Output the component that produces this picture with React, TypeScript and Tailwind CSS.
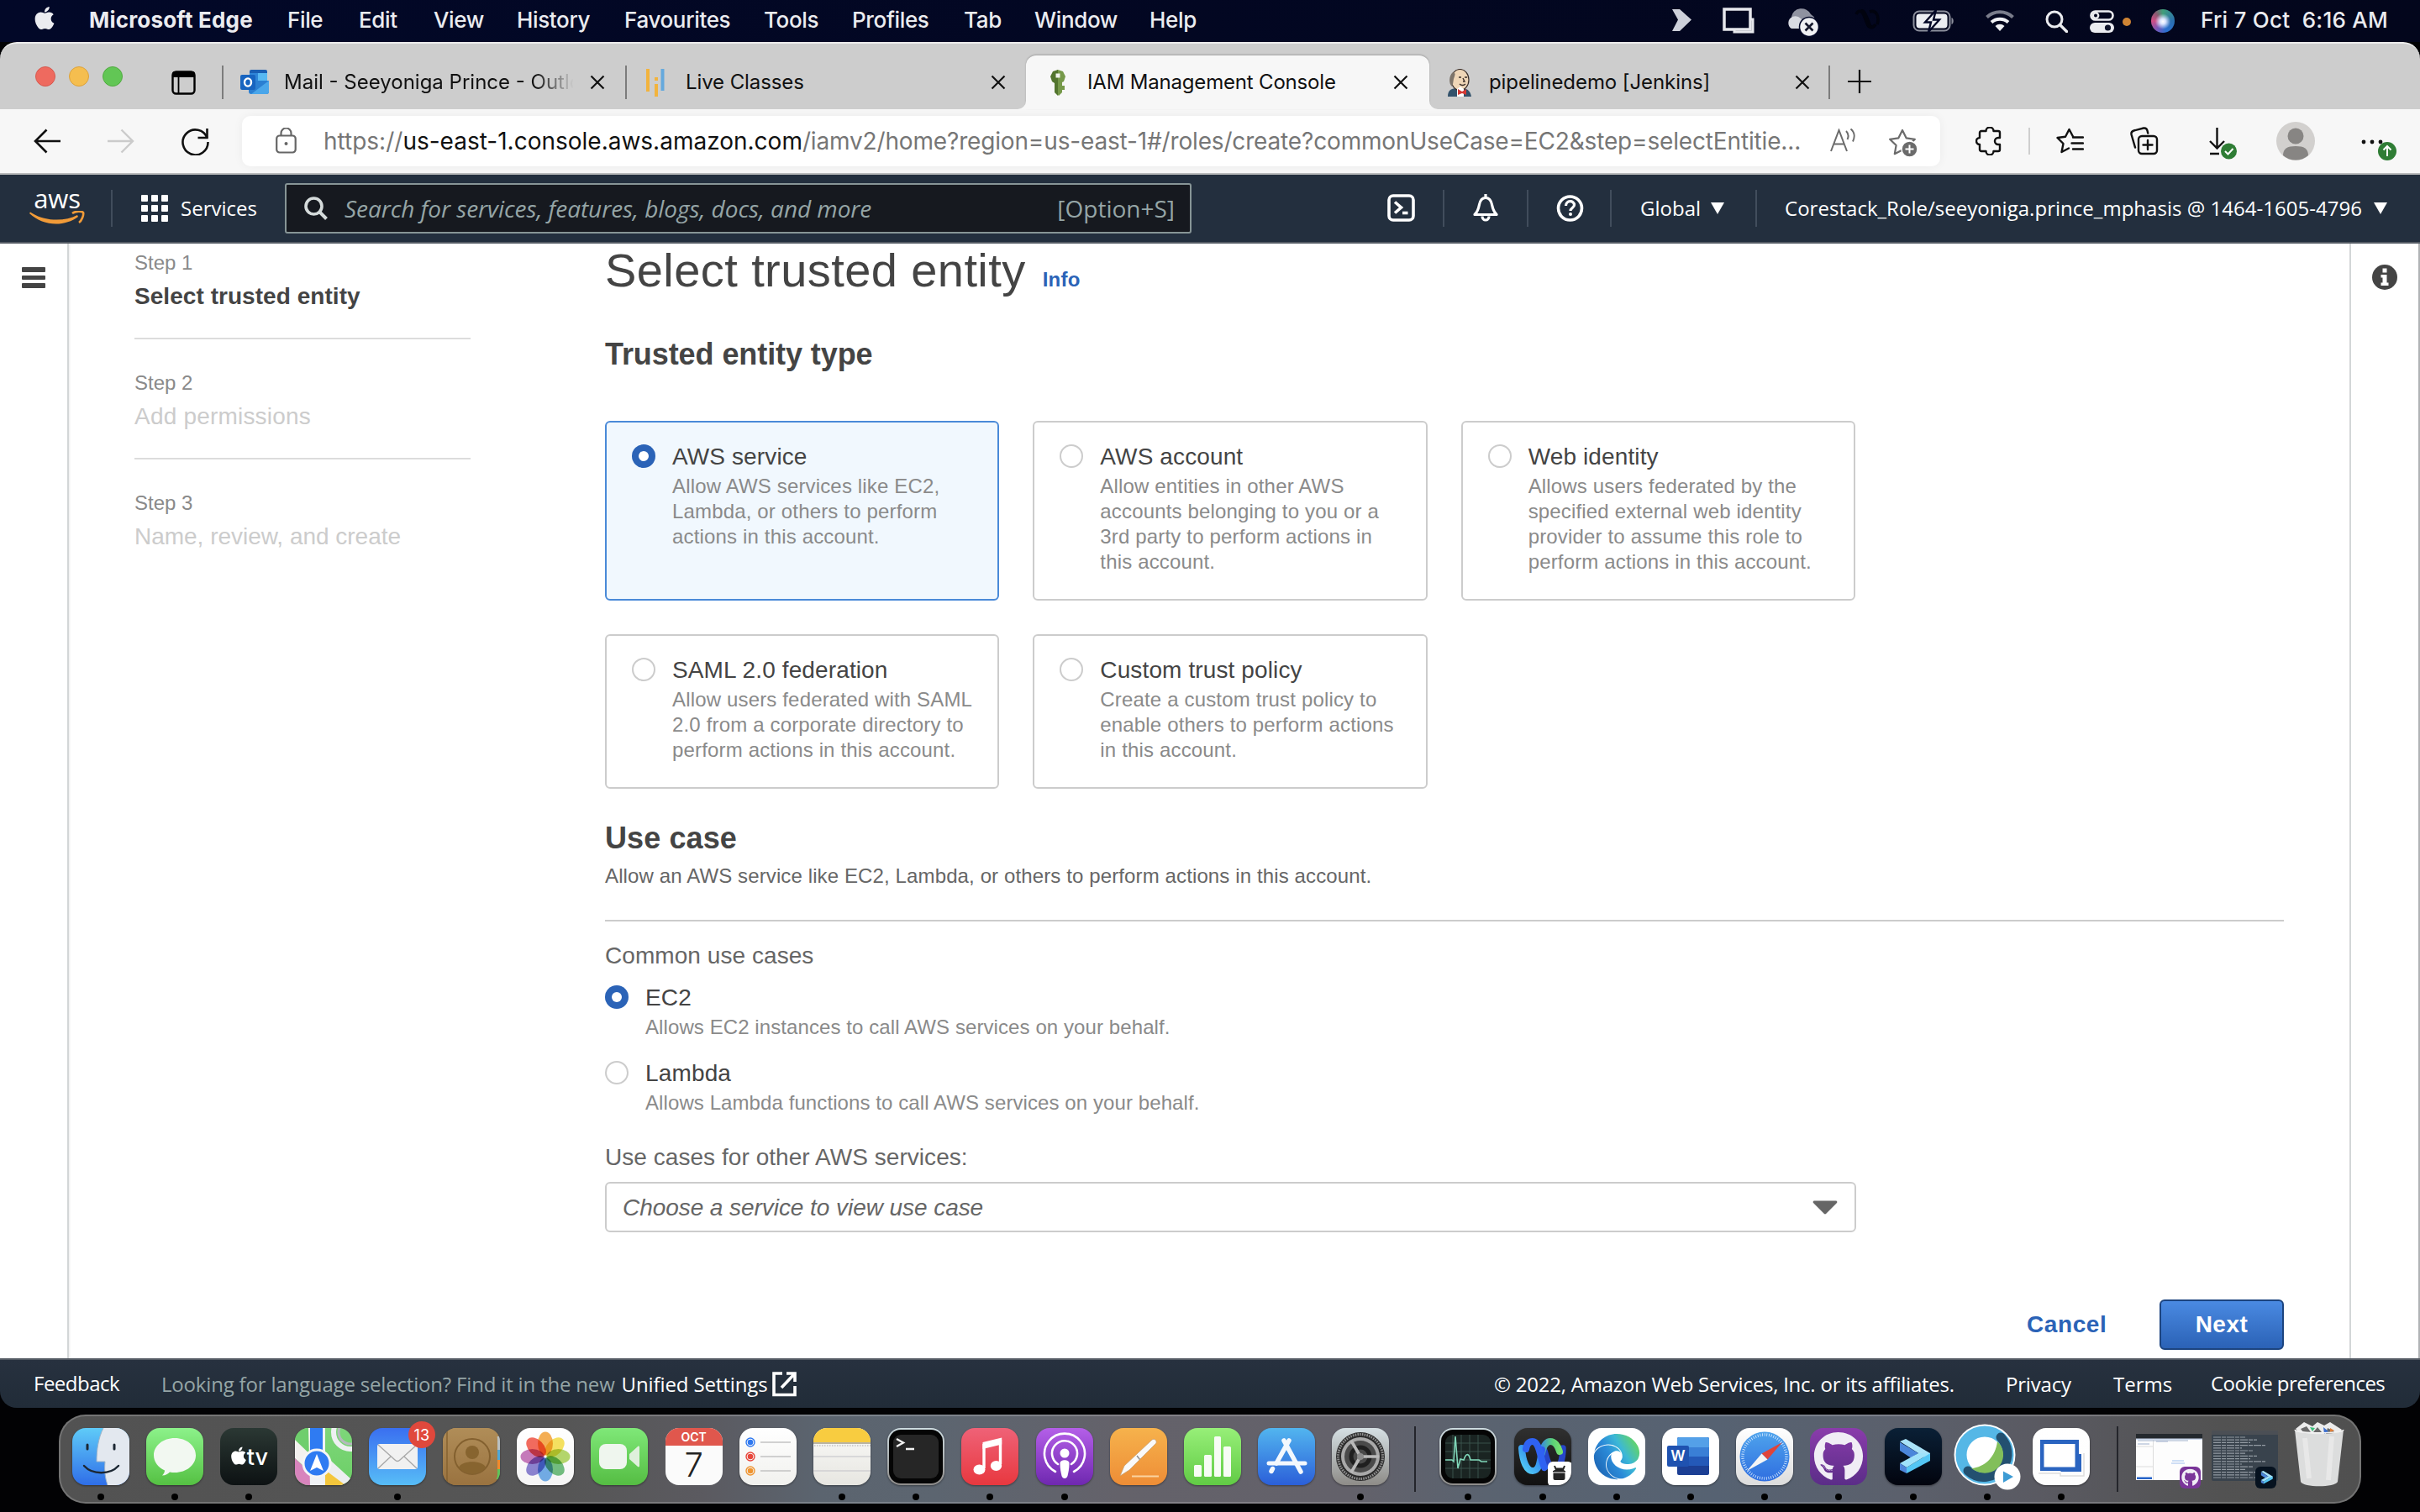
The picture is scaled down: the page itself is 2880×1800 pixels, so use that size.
import type { ReactNode } from "react";
import { FaApple, FaGithub, FaEdge } from "react-icons/fa";

/* ---------- small helpers ---------- */

function Svg({ w, h, vb, className = "", children }: { w: number; h: number; vb?: string; className?: string; children: ReactNode }) {
  return (
    <svg width={w} height={h} viewBox={vb ?? `0 0 ${w} ${h}`} className={`shrink-0 ${className}`} fill="none">
      {children}
    </svg>
  );
}

/* ---------- macOS menu bar ---------- */

const menus: [string, string][] = [
  ["File", "w-[85px]"],
  ["Edit", "w-[89px]"],
  ["View", "w-[99px]"],
  ["History", "w-[128px]"],
  ["Favourites", "w-[166px]"],
  ["Tools", "w-[105px]"],
  ["Profiles", "w-[133px]"],
  ["Tab", "w-[84px]"],
  ["Window", "w-[137px]"],
  ["Help", "w-[60px]"],
];

function MenuBar() {
  return (
    <div className="flex h-[50px] items-center bg-linear-to-r from-[#020828] to-[#03061c] pb-[4px] font-[Inter,sans-serif] text-[26px] font-medium text-[#ebecf0]">
      <div className="flex w-[1989px] shrink-0 items-center pl-[38px]">
        <FaApple className="mt-[-3px] size-[31px] w-[30px] shrink-0" />
        <div className="ml-[38px] w-[236px] font-bold tracking-[0.2px]">Microsoft Edge</div>
        {menus.map(([label, w]) => (
          <div key={label} className={`${w} shrink-0 tracking-[-0.35px]`}>{label}</div>
        ))}
      </div>
      <Svg w={26} h={27}>
        <path d="M1 1h9l14 12.500l-14 13.500H1l7-13.500z" fill="#cdd0da" />
      </Svg>
      <Svg w={38} h={31} className="ml-[35px] mt-[3px]">
        <path d="M2 2h31v24H2z" stroke="#e6e7ec" strokeWidth="3.500" />
        <path d="M14 26v3h22V14h-2" stroke="#e6e7ec" strokeWidth="3" />
      </Svg>
      <Svg w={42} h={36} className="ml-[36px] mt-[6px]">
        <path d="M8 12a12 11 0 0 1 23-3a11 11 0 0 1 5 6L20 24z" fill="#8f92a0" />
        <path d="M9 12a9 9 0 0 1 10 2l11 9v3H8A8 8 0 0 1 9 12z" fill="#d7d9e0" />
        <circle cx="29" cy="24" r="11.500" fill="#f0f1f4" stroke="#020726" strokeWidth="1.500" />
        <path d="M24.500 19.500l9 9m0-9l-9 9" stroke="#15182c" strokeWidth="2.600" />
      </Svg>
      <Svg w={31} h={24} className="ml-[41px]">
        <path d="M2 6c2-5 7-5 9 1l4 10c2 6 7 6 10 1M8 2c6-2 9 20 13 19M18 3c8-3 12 6 9 15" stroke="#01030f" strokeWidth="3.500" />
      </Svg>
      <Svg w={50} h={26} className="ml-[38px] mt-[3px]">
        <rect x="1.500" y="1.500" width="43" height="23" rx="6.500" stroke="#8c8f9c" strokeWidth="2" />
        <rect x="4.500" y="4.500" width="37" height="17" rx="4" fill="#eceef2" />
        <path d="M46.500 9v8c3-1 3-7 0-8z" fill="#8c8f9c" />
        <path d="M28 0L15 14.500h7L19 26l13-14.500h-7z" fill="#eceef2" stroke="#020726" strokeWidth="2.400" />
      </Svg>
      <Svg w={34} h={25} className="ml-[37px] mt-[2px]">
        <path d="M1.500 8.500a22.500 22.500 0 0 1 31 0" stroke="#7a7d8b" strokeWidth="4" />
        <path d="M7 14.500a15 15 0 0 1 20 0" stroke="#f0f1f4" strokeWidth="4" />
        <path d="M17 25l-5.500-6a8 8 0 0 1 11 0z" fill="#f0f1f4" />
      </Svg>
      <Svg w={27} h={27} className="ml-[37px] mt-[4px]">
        <circle cx="11" cy="11" r="9" stroke="#ebecf0" strokeWidth="3" />
        <path d="M17.500 17.500l8 8" stroke="#ebecf0" strokeWidth="3.400" strokeLinecap="round" />
      </Svg>
      <Svg w={29} h={27} className="ml-[26px] mt-[4px]">
        <rect x="1.500" y="1.500" width="26" height="10" rx="5" stroke="#ebecf0" strokeWidth="2.600" />
        <circle cx="7" cy="6.500" r="3.200" stroke="#ebecf0" strokeWidth="2.400" />
        <rect x="0" y="15" width="29" height="12" rx="6" fill="#ebecf0" />
        <circle cx="21.500" cy="21" r="3.600" fill="#10142c" />
      </Svg>
      <div className="ml-[10px] mt-[6px] size-[10px] shrink-0 rounded-full bg-[#cf8434]" />
      <div className="ml-[24px] mt-[3px] size-[28px] shrink-0 rounded-full bg-[radial-gradient(circle_at_50%_52%,#ffffff_0%,#d9e4ff_16%,transparent_46%),conic-gradient(#3f9f7a,#2b6fb0_25%,#2a6fd0_45%,#7a58b8_60%,#d04e86_75%,#8a5a70_88%,#3f9f7a)]" />
      <div className="ml-[31px] shrink-0 whitespace-pre tracking-[0.25px]">Fri 7 Oct  6:16 AM</div>
    </div>
  );
}

/* ---------- browser tab strip ---------- */

const Close = ({ className = "" }: { className?: string }) => (
  <Svg w={18} h={18} className={className}>
    <path d="M1.500 1.500l15 15m0-15l-15 15" stroke="#111" strokeWidth="2.200" />
  </Svg>
);

function OutlookIcon() {
  return (
    <Svg w={34} h={30}>
      <rect x="11" y="0" width="21" height="24" rx="2" fill="#1a5fb4" />
      <rect x="21" y="4" width="11" height="9" fill="#57b8f2" />
      <rect x="11" y="4" width="10" height="9" fill="#2f86d8" />
      <path d="M10 13h24v13a3 3 0 0 1-3 3H13a3 3 0 0 1-3-3z" fill="#2b7fd2" />
      <path d="M34 13v13a3 3 0 0 1-3 3H13z" fill="#4aa6ea" />
      <rect x="0" y="6" width="18" height="18" rx="2" fill="#1764c0" />
      <ellipse cx="9" cy="15" rx="4" ry="4.600" stroke="#fff" strokeWidth="2.400" />
    </Svg>
  );
}

function KeyIcon() {
  return (
    <Svg w={20} h={31}>
      <path d="M10 0l6 2l3 6l-2 6l-2 1v4h3v5h-3v3l-4 4l-2-2V0z" fill="#76994a" />
      <path d="M10 0L4 2L1 8l2 6l3 2v11l4 4z" fill="#53752f" />
      <rect x="7.500" y="4.500" width="5" height="5" fill="#f1f4ec" />
    </Svg>
  );
}

function JenkinsIcon() {
  return (
    <Svg w={30} h={33}>
      <path d="M1 33c0-7 3-9 9-10h10c5 1 8 4 9 10z" fill="#33526b" />
      <ellipse cx="15.500" cy="13" rx="10.500" ry="12.500" fill="#efd6b7" stroke="#3b2f2a" strokeWidth="1.200" />
      <path d="M7 4C2 8 2 18 6 21c2-4 1-8 3-12c1-3 1-4-2-5z" fill="#7d746a" />
      <path d="M12 24l4-3l4 3v9h-8z" fill="#fff" />
      <path d="M13 24l5 3l5-3v7l-5-2l-5 2z" fill="#d33833" />
      <path d="M14 10h3M21 10h3M15 18c2 2 5 2 7 0M19 11l2 4h-2" stroke="#3b2f2a" strokeWidth="1.400" />
    </Svg>
  );
}

function TabStrip() {
  return (
    <div className="flex h-[80px] items-end rounded-t-[20px] border-t-2 border-[#ececec] bg-[#cdcdcd] pl-[42px] font-[Inter,sans-serif] text-[24px] text-[#111]">
      <div className="flex h-[78px] items-center gap-[16px]">
        <div className="size-[24px] rounded-full border border-[#d65a50] bg-[#ee6a5f]" />
        <div className="size-[24px] rounded-full border border-[#dca23c] bg-[#f5be4f]" />
        <div className="size-[24px] rounded-full border border-[#52ab42] bg-[#62c655]" />
      </div>
      <div className="flex h-[64px] grow items-center">
        <Svg w={29} h={29} className="ml-[58px]">
          <rect x="1.500" y="1.500" width="26" height="26" rx="4" stroke="#000" strokeWidth="2.400" />
          <path d="M1 8V4a3 3 0 0 1 3-3h21a3 3 0 0 1 3 3v4z" fill="#000" />
          <path d="M8.500 8v19" stroke="#000" strokeWidth="1.800" />
        </Svg>
        <div className="ml-[31px] h-[40px] w-[2px] shrink-0 bg-[#7c7c7c]" />
        <div className="ml-[20px] flex w-[458px] shrink-0 items-center">
          <OutlookIcon />
          <div className="ml-[18px] w-[348px] overflow-hidden whitespace-nowrap [mask-image:linear-gradient(to_right,black_86%,transparent_99%)]">Mail - Seeyoniga Prince - Outlook</div>
          <Close className="ml-[16px]" />
        </div>
        <div className="h-[40px] w-[2px] shrink-0 bg-[#7c7c7c]" />
        <div className="flex w-[475px] shrink-0 items-center pl-[23px]">
          <Svg w={22} h={33}>
            <path d="M2 0v27M12 10v4M12 18v15" stroke="#f2b33d" strokeWidth="4" />
            <path d="M19.500 0v26" stroke="#65a9dd" strokeWidth="4" />
          </Svg>
          <div className="ml-[25px] w-[363px] tracking-[-0.1px]">Live Classes</div>
          <Close />
        </div>
        <div className="relative flex h-[64px] w-[480px] shrink-0 items-center rounded-t-[12px] bg-[#f7f7f7] pl-[28px] shadow-[0_-1px_2px_rgba(0,0,0,0.22)]">
          <Svg w={10} h={10} className="absolute bottom-0 left-[-10px]"><path d="M10 0v10H0a10 10 0 0 0 10-10z" fill="#f7f7f7" /></Svg>
          <Svg w={10} h={10} className="absolute right-[-10px] bottom-0"><path d="M0 0v10h10a10 10 0 0 1-10-10z" fill="#f7f7f7" /></Svg>
          <KeyIcon />
          <div className="ml-[25px] w-[364px] tracking-[-0.18px]">IAM Management Console</div>
          <Close />
        </div>
        <div className="flex w-[475px] shrink-0 items-center pl-[21px]">
          <JenkinsIcon />
          <div className="ml-[20px] w-[364px] tracking-[-0.08px]">pipelinedemo [Jenkins]</div>
          <Close />
        </div>
        <div className="h-[40px] w-[2px] shrink-0 bg-[#7c7c7c]" />
        <Svg w={28} h={28} className="ml-[21px] mb-[2px]">
          <path d="M14 0v28M0 14h28" stroke="#111" strokeWidth="2.200" />
        </Svg>
      </div>
    </div>
  );
}

/* ---------- browser toolbar ---------- */

function Toolbar() {
  return (
    <div className="flex h-[78px] items-center border-b-2 border-[#b9babb] bg-[#f7f7f7] pr-[20px]">
      <Svg w={33} h={30} className="ml-[40px]">
        <path d="M32 15H2M15.500 1.500L2 15l13.500 13.500" stroke="#111" strokeWidth="2.600" />
      </Svg>
      <Svg w={33} h={30} className="ml-[54px]">
        <path d="M1 15h30M17.500 1.500L31 15L17.500 28.500" stroke="#cbcbcb" strokeWidth="2.400" />
      </Svg>
      <Svg w={33} h={33} className="ml-[56px]">
        <path d="M30.500 12A15 15 0 1 0 31.500 17" stroke="#111" strokeWidth="2.600" />
        <path d="M30.500 1v11H19.500" stroke="#111" strokeWidth="2.600" />
      </Svg>
      <div className="ml-[39px] flex h-[60px] w-[2021px] shrink-0 items-center rounded-[10px] bg-white pl-[40px] font-[Inter,sans-serif] text-[28px] text-[#767676] shadow-[0_0_12px_rgba(0,0,0,0.05)]">
        <Svg w={25} h={31} className="mb-[2px]">
          <rect x="1.200" y="9.500" width="22.500" height="20" rx="3.500" stroke="#666" strokeWidth="2.200" />
          <path d="M6.500 9V6.500a6 6 0 0 1 12 0V9" stroke="#666" strokeWidth="2.200" />
          <circle cx="12.500" cy="19" r="2" fill="#666" />
        </Svg>
        <div className="ml-[32px] w-[1793px] shrink-0 whitespace-nowrap">
          https://<span className="text-[#111]">us-east-1.console.aws.amazon.com</span>
          <span className="tracking-[-0.16px]">/iamv2/home?region=us-east-1#/roles/create?commonUseCase=EC2&amp;step=selectEntitie...</span>
        </div>
        <Svg w={32} h={28} className="mb-[2px]">
          <path d="M1 27L10.500 2L20 27M4.500 18.500h12" stroke="#6b6b6b" strokeWidth="2" />
          <path d="M19 3c3 3 3 7 1.500 10M24.500 0.500c5 4 5 10 2.500 15" stroke="#6b6b6b" strokeWidth="2" />
        </Svg>
        <Svg w={36} h={34} className="ml-[37px] mt-[3px]">
          <path d="M17 2l4.600 9.300l10.300 1.500l-7.500 7.200l1.800 10.200L17 25.400L7.800 30.200l1.800-10.200L2.100 12.800l10.300-1.500z" stroke="#6b6b6b" strokeWidth="2.200" strokeLinejoin="round" />
          <circle cx="25.500" cy="24.500" r="9.500" fill="#6b6b6b" stroke="#fff" strokeWidth="1.500" />
          <path d="M25.500 19.500v10M20.500 24.500h10" stroke="#fff" strokeWidth="2" />
        </Svg>
      </div>
      <Svg w={32} h={34} className="ml-[42px]">
        <path d="M7 5h5.500a4.500 4.500 0 0 1 9 0H27a2 2 0 0 1 2 2v6h-2a4 4 0 0 0 0 8h2v6a2 2 0 0 1-2 2h-5.500a4.500 4.500 0 0 1-9 0H7a2 2 0 0 1-2-2v-6a4 4 0 0 1 0-8V7a2 2 0 0 1 2-2z" stroke="#111" strokeWidth="2.400" strokeLinejoin="round" />
      </Svg>
      <div className="ml-[31px] h-[32px] w-[2px] shrink-0 bg-[#cfcfcf]" />
      <Svg w={33} h={32} className="ml-[31px]">
        <path d="M20 10.500L15.500 2L11 10.800L1.500 12l7 7L6.500 29l8.500-4.500" stroke="#111" strokeWidth="2.400" strokeLinejoin="round" strokeLinecap="round" />
        <path d="M20 11.500h12M18.500 18.500H32M20 25.500h12" stroke="#111" strokeWidth="2.400" strokeLinecap="round" />
      </Svg>
      <Svg w={35} h={34} className="ml-[54px]">
        <rect x="11" y="11" width="22" height="21" rx="4" stroke="#111" strokeWidth="2.400" />
        <path d="M22 16v11M16.500 21.500h11M7 24.500L2.500 9a4 4 0 0 1 3-4.500L17 1.500a4 4 0 0 1 4.500 3l.7 3" stroke="#111" strokeWidth="2.400" strokeLinecap="round" />
      </Svg>
      <Svg w={34} h={38} className="ml-[60px] mt-[5px]">
        <path d="M9.500 0v24M1 16l8.500 8.500L18 16M1 31h11" stroke="#111" strokeWidth="2.400" />
        <circle cx="23.500" cy="28" r="9.500" fill="#2f7d35" />
        <path d="M19 28l3.500 3.500l6-6.500" stroke="#fff" strokeWidth="2" />
      </Svg>
      <Svg w={46} h={46} className="ml-[46px]">
        <circle cx="23" cy="23" r="23" fill="#d2d0ce" />
        <circle cx="23" cy="17" r="9.500" fill="#878583" />
        <path d="M8 40c0-8 5-11 15-11s15 3 15 11a23 23 0 0 1-30 0z" fill="#878583" />
      </Svg>
      <Svg w={44} h={26} className="ml-[55px] mt-[20px]">
        <circle cx="3" cy="4" r="2.400" fill="#111" />
        <circle cx="13" cy="4" r="2.400" fill="#111" />
        <circle cx="23" cy="4" r="2.400" fill="#111" />
        <circle cx="31" cy="15" r="11" fill="#2f7d35" />
        <path d="M31 21V9.500M26.500 13.500L31 9l4.500 4.500" stroke="#fff" strokeWidth="2" />
      </Svg>
    </div>
  );
}

/* ---------- AWS navigation ---------- */

const Divider = ({ className }: { className: string }) => <div className={`h-[44px] w-[2px] shrink-0 bg-[#414d5c] ${className}`} />;

function AwsNav() {
  return (
    <div className="flex h-[82px] items-center border-b-2 border-[#545b64] bg-[#232f3e] font-['Open_Sans',sans-serif] text-[24px] font-medium text-white">
      <div className="ml-[35px] flex w-[66px] shrink-0 flex-col items-center">
        <div className="h-[26px] text-[31px] leading-[18px] font-medium tracking-[-0.2px]">aws</div>
        <Svg w={66} h={18} className="mt-[-2px]">
          <path d="M1 1.500C18 13 42 13 57 5l1 2C42 19 17 19 0 3z" fill="#f19b38" />
          <path d="M51 3c4-3 11-3 13-1c1 3-2 10-5 12" stroke="#f19b38" strokeWidth="2.600" />
        </Svg>
      </div>
      <Divider className="ml-[31px]" />
      <div className="ml-[34px] grid grid-cols-3 gap-[4px]">
        {Array.from({ length: 9 }, (_, i) => <div key={i} className="size-[8px] rounded-[1px] bg-white" />)}
      </div>
      <div className="ml-[15px] w-[124px] shrink-0">Services</div>
      <div className="flex h-[60px] w-[1079px] shrink-0 items-center rounded-[3px] border-2 border-[#879596] bg-[#16191f] pr-[18px] pl-[21px] text-[28px] font-normal text-[#95a5a6]">
        <Svg w={28} h={28}>
          <circle cx="11.500" cy="11.500" r="9.500" stroke="#d5dbdb" strokeWidth="3.600" />
          <path d="M18.500 18.500l8 8" stroke="#d5dbdb" strokeWidth="4" />
        </Svg>
        <div className="ml-[20px] grow tracking-[-0.06px] whitespace-nowrap italic">Search for services, features, blogs, docs, and more</div>
        <div>[Option+S]</div>
      </div>
      <Svg w={34} h={34} className="ml-[233px]">
        <rect x="2" y="2" width="29" height="29" rx="5" stroke="#fff" strokeWidth="3.600" />
        <path d="M9 9.500l7.500 6.500L9 22.500" stroke="#fff" strokeWidth="3.600" />
        <path d="M18 22.500h6.500" stroke="#fff" strokeWidth="3.600" />
      </Svg>
      <Divider className="ml-[32px]" />
      <Svg w={32} h={34} className="ml-[33px]">
        <path d="M16 0v4M3 24.500c4-4 4.500-7 5.500-12c1-5 3.500-8 7.500-8s6.500 3 7.500 8c1 5 1.500 8 5.500 12z" stroke="#fff" strokeWidth="3.200" strokeLinejoin="round" />
        <path d="M12 26.500c0 6 8 6 8 0" stroke="#fff" strokeWidth="3.200" />
      </Svg>
      <Divider className="ml-[33px]" />
      <Svg w={34} h={34} className="ml-[33px]">
        <circle cx="16.500" cy="17" r="14" stroke="#fff" strokeWidth="3.600" />
        <path d="M11.500 14c0-7 10-7 10-1c0 3.500-4.500 3.500-4.500 7" stroke="#fff" strokeWidth="3.200" />
        <circle cx="17" cy="24" r="2" fill="#fff" />
      </Svg>
      <Divider className="ml-[30px]" />
      <div className="ml-[34px] w-[84px] shrink-0">Global</div>
      <Svg w={16} h={14}><path d="M0 0h16L8 14z" fill="#fff" /></Svg>
      <Divider className="ml-[37px]" />
      <div className="ml-[33px] w-[701px] shrink-0 tracking-[0.03px] whitespace-nowrap">Corestack_Role/seeyoniga.prince_mphasis @ 1464-1605-4796</div>
      <Svg w={16} h={14}><path d="M0 0h16L8 14z" fill="#fff" /></Svg>
    </div>
  );
}

/* ---------- console content ---------- */

const steps = [
  { n: "Step 1", title: "Select trusted entity", style: "font-bold text-[#444] tracking-[0.05px]" },
  { n: "Step 2", title: "Add permissions", style: "text-[#ccc] tracking-[0.2px]" },
  { n: "Step 3", title: "Name, review, and create", style: "text-[#ccc] tracking-[-0.02px]" },
];

function Steps() {
  return (
    <div className="w-[400px] shrink-0 pt-[7px]">
      {steps.map((s, i) => (
        <div key={s.n} className={i < 2 ? "mb-[36px] border-b-2 border-[#dcdcdc] pb-[31px]" : ""}>
          <div className="text-[24px] leading-[32px] text-[#8a8a8a]">{s.n}</div>
          <div className={`mt-[6px] text-[28px] leading-[36px] ${s.style}`}>{s.title}</div>
        </div>
      ))}
    </div>
  );
}

const Radio = ({ on }: { on?: boolean }) =>
  on ? (
    <div className="flex size-[28px] shrink-0 items-center justify-center rounded-full bg-[#2b63b7]">
      <div className="size-[12px] rounded-full bg-white" />
    </div>
  ) : (
    <div className="size-[28px] shrink-0 rounded-full border-2 border-[#ccc] bg-white" />
  );

const entities: { title: string; lines: string[]; on?: boolean }[] = [
  { title: "AWS service", lines: ["Allow AWS services like EC2,", "Lambda, or others to perform", "actions in this account."], on: true },
  { title: "AWS account", lines: ["Allow entities in other AWS", "accounts belonging to you or a", "3rd party to perform actions in", "this account."] },
  { title: "Web identity", lines: ["Allows users federated by the", "specified external web identity", "provider to assume this role to", "perform actions in this account."] },
  { title: "SAML 2.0 federation", lines: ["Allow users federated with SAML", "2.0 from a corporate directory to", "perform actions in this account."] },
  { title: "Custom trust policy", lines: ["Create a custom trust policy to", "enable others to perform actions", "in this account."] },
];

function EntityCard({ title, lines, on }: { title: string; lines: string[]; on?: boolean }) {
  return (
    <div className={`flex rounded-[6px] border-2 pt-[20px] pb-[29px] pl-[30px] ${on ? "border-[#4a8ad8] bg-[#f1f8fe]" : "border-[#ccc] bg-white"}`}>
      <div className="flex h-[40px] items-center"><Radio on={on} /></div>
      <div className="ml-[20px] pt-px whitespace-nowrap">
        <div className="text-[28px] leading-[40px] tracking-[0.12px] text-[#444]">{title}</div>
        <div className="text-[24px] leading-[30px] tracking-[0.16px] text-[#8a8a8a]">
          {lines.map((l) => <div key={l}>{l}</div>)}
        </div>
      </div>
    </div>
  );
}

function UseCase({ title, desc, on }: { title: string; desc: string; on?: boolean }) {
  return (
    <div className="flex h-[90px]">
      <div className="flex h-[40px] items-center"><Radio on={on} /></div>
      <div className="ml-[20px] pt-px">
        <div className="text-[28px] leading-[40px] tracking-[0.15px] text-[#444]">{title}</div>
        <div className="text-[24px] leading-[30px] tracking-[0.09px] text-[#8a8a8a]">{desc}</div>
      </div>
    </div>
  );
}

function Content() {
  return (
    <div className="flex h-[1327px] border-r-2 border-[#b0b3b5] bg-white font-['Liberation_Sans',Arial,sans-serif] text-[#444]">
      <div className="w-[82px] shrink-0 border-r-2 border-[#d3d6d7] pt-[28px] pl-[26px] shadow-[1px_0_2px_rgba(0,0,0,0.08)]">
        <div className="flex w-[28px] flex-col gap-[4px]">
          <div className="h-[5.500px] rounded-[1px] bg-[#444]" />
          <div className="h-[5.500px] rounded-[1px] bg-[#444]" />
          <div className="h-[5.500px] rounded-[1px] bg-[#444]" />
        </div>
      </div>
      <div className="flex grow pl-[78px]">
        <Steps />
        <div className="ml-[160px] w-[1998px] shrink-0">
          <div className="flex h-[64px] items-baseline whitespace-nowrap">
            <h1 className="text-[56px] leading-[64px] tracking-[0.42px]">Select trusted entity</h1>
            <span className="ml-[20px] text-[24px] font-bold tracking-[0.3px] text-[#2b63b7]">Info</span>
          </div>
          <h2 className="mt-[45px] text-[36px] leading-[46px] font-bold tracking-[-0.08px]">Trusted entity type</h2>
          <div className="mt-[56px] grid w-[1488px] grid-cols-3 gap-[40px]">
            {entities.map((e) => <EntityCard key={e.title} {...e} />)}
          </div>
          <h2 className="mt-[35px] text-[36px] leading-[48px] font-bold tracking-[0.1px]">Use case</h2>
          <p className="mt-[5px] text-[24px] leading-[32px] tracking-[0.12px] text-[#666]">Allow an AWS service like EC2, Lambda, or others to perform actions in this account.</p>
          <div className="mt-[36px] h-[2px] bg-[#ccc]" />
          <div className="mt-[21px] text-[28px] leading-[40px] tracking-[0.06px] text-[#666]">Common use cases</div>
          <div className="mt-[9px]">
            <UseCase title="EC2" desc="Allows EC2 instances to call AWS services on your behalf." on />
            <UseCase title="Lambda" desc="Allows Lambda functions to call AWS services on your behalf." />
          </div>
          <div className="mt-[11px] text-[28px] leading-[40px] tracking-[0.05px] text-[#666]">Use cases for other AWS services:</div>
          <div className="mt-[9px] flex h-[60px] w-[1489px] items-center justify-between rounded-[6px] border-2 border-[#ccc] pr-[20px] pl-[19px]">
            <span className="pt-px text-[28px] tracking-[-0.06px] text-[#666] italic">Choose a service to view use case</span>
            <Svg w={30} h={17}><path d="M2 .5h26a1.500 1.500 0 0 1 1 2.500L16 16a1.500 1.500 0 0 1-2 0L1 3A1.500 1.500 0 0 1 2 .5z" fill="#666" /></Svg>
          </div>
          <div className="mt-[80px] flex h-[60px] items-center justify-end text-[28px] font-bold">
            <span className="w-[158px] tracking-[0.6px] text-[#2b63b7]">Cancel</span>
            <button className="h-[60px] w-[148px] rounded-[6px] border-2 border-[#1c447f] bg-linear-to-b from-[#4a8ae2] to-[#2b62b6] font-bold tracking-[0.5px] text-white">Next</button>
          </div>
        </div>
      </div>
      <div className="flex w-[82px] shrink-0 justify-center border-l-2 border-[#d3d6d7] pt-[25px]">
        <Svg w={30} h={30}>
          <circle cx="15" cy="15" r="15" fill="#444" />
          <path d="M12.500 4.500h5v5h-5zM10.500 12h7v9.500h2V25h-9v-3.500h2v-6h-2z" fill="#fff" />
        </Svg>
      </div>
    </div>
  );
}

function Footer() {
  return (
    <div className="flex h-[59px] items-center rounded-b-[20px] border-t-2 border-[#545b64] bg-linear-to-b from-[#27313f] to-[#212c38] font-['Open_Sans',sans-serif] text-[24px] font-medium whitespace-nowrap text-white">
      <div className="mt-[-2px] w-[153px] shrink-0 pl-[40px] tracking-[-0.5px]">Feedback</div>
      <div className="ml-[39px] font-normal tracking-[-0.18px] text-[#95a5a6]">Looking for language selection? Find it in the new</div>
      <div className="ml-[8px] tracking-[-0.12px]">Unified Settings</div>
      <Svg w={30} h={30} className="ml-[6px]">
        <path d="M12 2H2v25.500h25V17" stroke="#fff" strokeWidth="3.600" />
        <path d="M17 2h10v10M27 2L11 19" stroke="#fff" strokeWidth="3.600" />
      </Svg>
      <div className="grow" />
      <div className="w-[609px] shrink-0 tracking-[-0.23px]">© 2022, Amazon Web Services, Inc. or its affiliates.</div>
      <div className="w-[128px] shrink-0 tracking-[-0.2px]">Privacy</div>
      <div className="w-[116px] shrink-0">Terms</div>
      <div className="mt-[-2px] w-[249px] shrink-0 tracking-[-0.5px]">Cookie preferences</div>
    </div>
  );
}

/* ---------- dock ---------- */

function Grad({ id, a, b }: { id: string; a: string; b: string }) {
  return (
    <linearGradient id={id} x1="0" y1="0" x2="0" y2="1">
      <stop offset="0" stopColor={a} />
      <stop offset="1" stopColor={b} />
    </linearGradient>
  );
}

function Tile({ id, a, b, children }: { id: string; a: string; b: string; children?: ReactNode }) {
  return (
    <svg width="68" height="68" viewBox="0 0 68 68" fill="none" className="overflow-visible drop-shadow-[0_1px_1px_rgba(0,0,0,0.4)]">
      <defs>
        <Grad id={id} a={a} b={b} />
        <clipPath id={`${id}c`}><rect width="68" height="68" rx="16" /></clipPath>
      </defs>
      <rect width="68" height="68" rx="16" fill={`url(#${id})`} />
      <g clipPath={`url(#${id}c)`}>{children}</g>
    </svg>
  );
}

const Finder = () => (
  <Tile id="finder" a="#5fcbf8" b="#2f6ee8">
    <path d="M37 0C31 12 29 26 29 40h10c-1 10 0 19 3 28h26V0z" fill="#e3e8ef" />
    <path d="M37 0C31 12 29 26 29 40h10c-1 10 0 19 3 28" stroke="#9fb4c8" strokeWidth="1" />
    <path d="M18 20v5M50 20v5" stroke="#1c2733" strokeWidth="3" strokeLinecap="round" />
    <path d="M14 45c10 11 31 11 41 0" stroke="#1c2733" strokeWidth="2.400" strokeLinecap="round" />
  </Tile>
);
const Messages = () => (
  <Tile id="messages" a="#8cf28a" b="#55c143">
    <path d="M34 12c14 0 25 9 25 20.500S48 53 34 53c-2 0-4 0-6-.6c-2 2-5 4-9 4c2-2 3-4 3-6C14 47 9 40 9 32.500C9 21 20 12 34 12z" fill="#f2f8f1" />
  </Tile>
);
const AppleTv = () => (
  <div className="flex size-[68px] items-center justify-center rounded-[16px] bg-linear-to-b from-[#2b3834] to-[#0d1213] font-[Inter,sans-serif] text-[27px] leading-none font-medium text-white">
    <FaApple className="mb-[2px] size-[24px] w-[20px]" />
    <span>tv</span>
  </div>
);
const Maps = () => (
  <Tile id="maps" a="#7ed67a" b="#6ccf66">
    <path d="M0 0h16v34L0 20z" fill="#6fce6d" />
    <path d="M0 14L56 68H36L0 36z" fill="#f3f1ef" />
    <path d="M0 36l34 32H0z" fill="#d884bd" />
    <path d="M16 0h20v68H18z" fill="#f0f2f5" />
    <path d="M18 0h15v40H18z" fill="#2f7bf2" />
    <path d="M33 30L68 62v6H36z" fill="#eceef0" />
    <path d="M36 50l24 18H36z" fill="#f4c63c" />
    <circle cx="66" cy="5" r="20" stroke="#eef0f2" strokeWidth="6" />
    <circle cx="66" cy="5" r="14" stroke="#b4b9bd" strokeWidth="3" />
    <circle cx="26" cy="42" r="16" fill="#2f7bf2" stroke="#f5f5f5" strokeWidth="3" />
    <path d="M26 31l8 20l-8-4l-8 4z" fill="#fff" />
  </Tile>
);
const Mail = () => (
  <div className="relative">
    <Tile id="mail" a="#3a6ff0" b="#57bdf7">
      <rect x="10" y="19" width="48" height="30" rx="3" fill="#f1f1f1" />
      <path d="M11 20l20 18c2 2 4 2 6 0l20-18M11 48l15-14M57 48L42 34" stroke="#a9a9a9" strokeWidth="1.400" />
    </Tile>
    <div className="absolute top-[-8px] right-[-11px] flex size-[32px] items-center justify-center rounded-full bg-[#e0483c] font-[Inter,sans-serif] text-[18px] text-white">13</div>
  </div>
);
const Contacts = () => (
  <Tile id="contacts" a="#b08d58" b="#9a7340">
    <rect x="62" y="10" width="6" height="16" fill="#b9c0c2" />
    <rect x="62" y="26" width="6" height="12" fill="#4fa8d8" />
    <rect x="62" y="38" width="6" height="11" fill="#f08a2c" />
    <rect x="62" y="49" width="6" height="12" fill="#5cc65a" />
    <rect x="0" y="0" width="65" height="68" rx="13" fill="url(#contacts)" />
    <path d="M5 2v64" stroke="#83602f" strokeWidth="1.400" />
    <circle cx="35" cy="34" r="21" stroke="#83602f" strokeWidth="2" />
    <circle cx="35" cy="29" r="8" fill="#87642f" />
    <path d="M19 47c3-9 29-9 32 0c-8 10-24 10-32 0z" fill="#87642f" />
  </Tile>
);
const petals = ["#f2a33c", "#f3dc4a", "#a9cf56", "#5fb36d", "#5f9fe0", "#7b72c8", "#bd68b0", "#ef5648"];
const Photos = () => (
  <Tile id="photos" a="#ffffff" b="#f5f5f5">
    {petals.map((c, i) => (
      <ellipse key={c} cx="34" cy="18.500" rx="9" ry="14" fill={c} fillOpacity="0.880" transform={`rotate(${i * 45} 34 34)`} className="mix-blend-multiply" />
    ))}
  </Tile>
);
const FaceTime = () => (
  <Tile id="facetime" a="#7fe878" b="#55bd43">
    <rect x="10" y="19" width="33" height="30" rx="8" fill="#eff6ee" />
    <path d="M46 31l10-9c1-1 2 0 2 1v22c0 1-1 2-2 1l-10-9z" fill="#dff0dc" />
  </Tile>
);
const CalendarIcon = () => (
  <div className="flex size-[68px] flex-col items-center overflow-hidden rounded-[16px] bg-[#fbfbfb] font-[Inter,sans-serif]">
    <div className="flex h-[21px] w-full items-center justify-center bg-[#e0574d] text-[14px] font-semibold text-white">OCT</div>
    <div className="text-[40px] leading-[45px] font-light text-[#222]">7</div>
  </div>
);
const Reminders = () => (
  <Tile id="reminders" a="#ffffff" b="#f1f1ee">
    {["#2f78f0", "#e8473c", "#ef9430"].map((c, i) => (
      <g key={c}>
        <circle cx="13" cy={17 + i * 17} r="5" stroke={c} strokeWidth="1.400" />
        <circle cx="13" cy={17 + i * 17} r="3.300" fill={c} />
        <path d={`M25 ${17 + i * 17}h36`} stroke="#c3c3c3" strokeWidth="1.500" />
      </g>
    ))}
  </Tile>
);
const Notes = () => (
  <Tile id="notes" a="#fafaf8" b="#e7e6e1">
    <rect width="68" height="17" fill="#f8cc40" />
    <path d="M0 18h68" stroke="#b9b3a3" strokeWidth="2" />
    <path d="M0 34h68M0 51h68" stroke="#cfcfd2" strokeWidth="1.500" />
    <path d="M1 21h68" stroke="#a8a8a8" strokeDasharray="1.500 1.500" />
  </Tile>
);
const Terminal = () => (
  <Tile id="terminal" a="#cfdde2" b="#8f8d8b">
    <rect x="2" y="2" width="64" height="64" rx="14" fill="#050505" />
    <rect x="7" y="8" width="54" height="52" rx="9" fill="#262626" />
    <path d="M11 13l8 4.500l-8 4.500M22 25h10" stroke="#f2f2f2" strokeWidth="2.400" />
  </Tile>
);
const Music = () => (
  <Tile id="music" a="#ef6277" b="#e8383f">
    <path d="M27 48V19M46.500 14v29" stroke="#fff" strokeWidth="3.400" />
    <path d="M25.500 17l22.700-5.500v8L25.500 25z" fill="#fff" />
    <ellipse cx="21.500" cy="49.500" rx="7" ry="6" fill="#fff" />
    <ellipse cx="41.500" cy="45" rx="6.700" ry="6" fill="#fff" />
  </Tile>
);
const Podcasts = () => (
  <Tile id="podcasts" a="#b45fe8" b="#6f28b0">
    <path d="M23 52a24 24 0 1 1 22 0" stroke="#fff" strokeWidth="2.600" strokeLinecap="round" />
    <path d="M26 43a15 15 0 1 1 16 0" stroke="#fff" strokeWidth="2.600" strokeLinecap="round" />
    <circle cx="34" cy="30" r="5.500" fill="#fff" />
    <path d="M28.500 42c0-5 11-5 11 0c0 6-1 11-2 15c-1 4-6 4-7 0c-1-4-2-9-2-15z" fill="#fff" />
  </Tile>
);
const Pages = () => (
  <Tile id="pages" a="#f6b24c" b="#ee8d36">
    <path d="M12 57l5-12L50 14c3-2 6 1 5 4L23 50z" fill="#fafafa" stroke="#c9a06c" strokeWidth="0.800" />
    <path d="M32 33l3.500 4.500" stroke="#8f8f8f" strokeWidth="1.500" />
    <path d="M26 57.500h32" stroke="#fbd3a0" strokeWidth="2" />
  </Tile>
);
const Numbers = () => (
  <Tile id="numbers" a="#97ef78" b="#61cb45">
    <g fill="#f7fcf5">
      <rect x="12" y="44" width="9" height="14" rx="1.500" />
      <rect x="24" y="32" width="9" height="26" rx="1.500" />
      <rect x="36" y="10" width="8" height="48" rx="1.500" />
      <rect x="47" y="22" width="9" height="36" rx="1.500" />
    </g>
  </Tile>
);
const AppStore = () => (
  <Tile id="appstore" a="#52b5ef" b="#2b5fd9">
    <g stroke="#f3f8fd" strokeLinecap="round">
      <path d="M37 15L22 42M31 15l20 37M17.500 48.500l-1.500 3" strokeWidth="5.500" />
      <path d="M13 42h43" strokeWidth="5" />
    </g>
  </Tile>
);
const Settings = () => (
  <Tile id="settings" a="#d5dfe3" b="#8e8c88">
    <circle cx="34" cy="34" r="29" fill="#2b2b2b" />
    <circle cx="34" cy="34" r="26.500" stroke="#8f8f8f" strokeWidth="3" strokeDasharray="1.600 1.200" />
    <circle cx="34" cy="34" r="23" fill="#a9a9a9" />
    <circle cx="34" cy="34" r="19" fill="#4a4a4a" />
    <circle cx="34" cy="34" r="11" stroke="#1f1f1f" strokeWidth="5" />
    <path d="M34 34h22M34 34L23 15M34 34L23 53" stroke="#b9b9b9" strokeWidth="3.600" />
    <circle cx="34" cy="34" r="4" fill="#8a8a8a" />
  </Tile>
);
const ActivityMonitor = () => (
  <Tile id="activity" a="#cfdde2" b="#8f8d8b">
    <rect x="2" y="2" width="64" height="64" rx="14" fill="#050505" />
    <rect x="7" y="8" width="54" height="52" rx="9" fill="#1a2422" />
    <path d="M16 8v52M26 8v52M36 8v52M46 8v52M7 18h54M7 28h54M7 38h54M7 48h54" stroke="#3c5750" strokeWidth="0.900" />
    <path d="M7 38h8l2 2l2-30l3 38l3-11l4 1c3-9 6-8 8 0h10l3 2h7" stroke="#7fd6b8" strokeWidth="1.600" />
  </Tile>
);
const Webex = () => (
  <Tile id="webex" a="#303030" b="#111111">
    <defs>
      <linearGradient id="wxa" x1="0" y1="1" x2="1" y2="0"><stop stopColor="#58d3f5" /><stop offset="0.500" stopColor="#3a9df0" /><stop offset="1" stopColor="#2f5bf0" /></linearGradient>
      <linearGradient id="wxb"><stop stopColor="#3a8fd8" /><stop offset="0.600" stopColor="#5ad078" /><stop offset="1" stopColor="#74e070" /></linearGradient>
    </defs>
    <path d="M58 24c0 14-4 25-10 25c-7 0-9-12-12-22" stroke="#2746c8" strokeWidth="7.500" strokeLinecap="round" />
    <path d="M33 30c2-9 5-14 10-14s9 5 11 12" stroke="url(#wxb)" strokeWidth="8" strokeLinecap="round" />
    <path d="M9 24c1 16 6 27 13 27c9 0 9-14 11-25" stroke="url(#wxa)" strokeWidth="8" strokeLinecap="round" />
    <path d="M14 25c1-6 4-9 8-9c8 0 9 20 14 31" stroke="#2f62f2" strokeWidth="8" strokeLinecap="round" />
    <rect x="40" y="40" width="30" height="30" rx="6" fill="#fff" />
    <rect x="46.500" y="50" width="14" height="12" rx="2" fill="#222" />
    <path d="M46 52h15M48 45l2 5M60 45l-2 5" stroke="#222" strokeWidth="2" />
    <path d="M49 49h10" stroke="#222" strokeWidth="3" />
    <path d="M46 53h15" stroke="#fff" strokeWidth="1" />
  </Tile>
);
const Edge = () => (
  <div className="flex size-[68px] items-center justify-center rounded-[16px] bg-white">
    <svg width="56" height="56" viewBox="0 0 56 56">
      <defs>
        <linearGradient id="edgeg" x1="0" y1="0.900" x2="1" y2="0.300">
          <stop offset="0" stopColor="#1b5fae" />
          <stop offset="0.450" stopColor="#2a8ad8" />
          <stop offset="0.700" stopColor="#3cb8d6" />
          <stop offset="1" stopColor="#62d368" />
        </linearGradient>
      </defs>
      <FaEdge size={56} fill="url(#edgeg)" />
    </svg>
  </div>
);
const Word = () => (
  <div className="relative">
    <Tile id="word" a="#ffffff" b="#ffffff">
      <rect x="18" y="11" width="38" height="45" rx="2" fill="#1c3f94" />
      <path d="M18 13a2 2 0 0 1 2-2h34a2 2 0 0 1 2 2v10H18z" fill="#54a0e8" />
      <rect x="18" y="23" width="38" height="11" fill="#3a7fd6" />
      <rect x="18" y="34" width="38" height="11" fill="#2459b8" />
      <rect x="6" y="21" width="26" height="25" rx="2" fill="#1f52b0" />
    </Tile>
    <span className="absolute top-[21px] left-[6px] w-[26px] text-center font-[Inter,sans-serif] text-[17px] leading-[25px] font-semibold text-white">W</span>
  </div>
);
const Safari = () => (
  <Tile id="safari" a="#ffffff" b="#dcdcdc">
    <defs><Grad id="safarib" a="#4ea3ec" b="#2f6ee0" /></defs>
    <circle cx="34" cy="34" r="29.500" fill="url(#safarib)" />
    <circle cx="34" cy="34" r="26" stroke="#d8ecff" strokeWidth="3.500" strokeDasharray="0.800 1.900" />
    <path d="M55 17L37.500 37.500l-7-7z" fill="#e0443a" />
    <path d="M13 51l24.500-13.500l-7-7z" fill="#f5f5f5" />
  </Tile>
);
const GitHub = () => (
  <div className="flex size-[68px] items-center justify-center rounded-[16px] bg-linear-to-b from-[#8a3cab] to-[#5b2d88]">
    <FaGithub className="size-[60px] text-[#f0edf5]" />
  </div>
);
function WarpShape() {
  return (
    <>
      <path d="M18 16l7-3l29 17v8l-4-1L40 30z" fill="#a9e2f8" />
      <path d="M18 17l22 13l-5 3v5L18 27z" fill="#4b86da" />
      <path d="M54 30v9L26 54v-7z" fill="#54c6f4" />
      <path d="M18 42l22-12l14 0L26 47z" fill="#9fe2fa" />
      <path d="M18 42l8 5v7l-8-4z" fill="#4f86da" />
    </>
  );
}
const Warp = () => <Tile id="warp" a="#0a2036" b="#02040e"><WarpShape /></Tile>;
const WebexMeet = () => (
  <svg width="80" height="80" viewBox="0 0 80 80" fill="none">
    <circle cx="37" cy="38" r="36.500" fill="#fff" />
    <circle cx="37" cy="38" r="28" fill="#fff" stroke="#55b7e6" strokeWidth="13" />
    <path d="M56 17c9 10 11 24 3 35c-10 14-29 17-42 5" stroke="#235070" strokeWidth="11" strokeLinecap="round" />
    <path d="M52 22c10 9 9 24 0 32c-8 7-20 8-31 0c16-1 29-14 31-32z" fill="#82bf5a" />
    <circle cx="64" cy="64" r="15.500" fill="#fff" />
    <path d="M59 57.500l12 6.500l-12 7z" fill="#3d9bd4" />
  </svg>
);
const RemoteDesktop = () => (
  <Tile id="rdp" a="#ffffff" b="#fdfdfd">
    <path d="M33 52h25V31h-6" fill="#2a64c0" />
    <rect x="9" y="14" width="46" height="37" fill="#2a64c0" />
    <rect x="13.500" y="19" width="37" height="27.500" fill="#fff" />
    <path d="M7 54h26v3h28V30" stroke="#dedede" strokeWidth="1.500" />
  </Tile>
);

function GitThumb() {
  return (
    <svg width="80" height="66" viewBox="0 0 80 66" fill="none">
      <rect width="79" height="55" fill="#fdfdfd" />
      <rect width="79" height="6" fill="#24292e" />
      <rect y="5.500" width="79" height="1.500" fill="#c9d6ea" />
      <path d="M20.500 6v49M0 15h20M0 39h20" stroke="#ddd" />
      <path d="M2 8h60M2 12h14M24 9h14" stroke="#9fb0cc" />
      <path d="M43 32h14M42 35h16" stroke="#9fc0ee" />
      <rect x="1" y="51.500" width="18" height="2.500" fill="#2563c8" />
      <rect x="52" y="39" width="25" height="26" rx="6" fill="#7a3599" />
      <FaGithub x="54" y="41.500" size={21} color="#f0edf5" />
    </svg>
  );
}
function TermThumb() {
  return (
    <svg width="80" height="70" viewBox="0 0 80 70" fill="none">
      <rect width="79" height="60" rx="2" fill="#39434d" />
      <rect width="79" height="5" fill="#4b4f55" />
      {Array.from({ length: 16 }, (_, i) => (
        <path key={i} d={`M2 ${8 + i * 3.2}h${[38, 52, 44, 62, 34, 48][i % 6]}`} stroke="#929aa2" strokeWidth="1.200" strokeDasharray="9 1 5 1" />
      ))}
      <g transform="translate(52 43)">
        <rect width="25" height="26" rx="6" fill="#06121f" />
        <g transform="scale(0.38)"><WarpShape /></g>
      </g>
    </svg>
  );
}
const Trash = () => (
  <svg width="62" height="80" viewBox="0 0 62 80" fill="none">
    <path d="M3 9l10-8l10 5l6-5l8 4l7-4l14 9l-6 8H10z" fill="#ececec" />
    <path d="M9 9l7-3l5 7h-9zM24 13l5-6l5 6zM39 15l2-7l8 4l-2 5z" fill="#6a6a6a" />
    <path d="M20 7l6 1l-3 4z" fill="#3bbf7a" />
    <path d="M36 7l6 5l-5 3z" fill="#3b6fd0" />
    <path d="M44 8l5 3l-5 2z" fill="#e0803a" />
    <path d="M2 10c12 7 46 7 58 0l-7 62c-3 7-41 7-44 0z" fill="#dcdddd" />
    <path d="M14 20l5 48M46 18l-4 52" stroke="#f3f3f3" strokeWidth="6" opacity="0.500" />
    <path d="M2 10c0 5 58 5 58 0" stroke="#f2f2f2" strokeWidth="1.500" />
  </svg>
);

function Slot({ children, dot, w = "w-[88.200px]" }: { children: ReactNode; dot?: boolean; w?: string }) {
  return (
    <div className={`flex shrink-0 flex-col items-center pt-[14px] ${w}`}>
      <div className="flex h-[68px] items-center justify-center">{children}</div>
      {dot && <div className="mt-[10px] size-[8px] rounded-full bg-black" />}
    </div>
  );
}

function Dock() {
  return (
    <div className="mt-[8px] ml-[70px] flex h-[106px] w-[2740px] rounded-[32px] border-2 border-white/20 bg-[linear-gradient(90deg,#525252_0%,#565656_22%,#5b5a60_28%,#5b646f_33%,#5c6570_38%,#64626a_46%,#63616a_56%,#5a6370_62%,#566272_72%,#5b606c_80%,#5a5a62_86%,#525252_94%,#505050_100%)] pl-[4px]">
      <Slot dot><Finder /></Slot>
      <Slot dot><Messages /></Slot>
      <Slot dot><AppleTv /></Slot>
      <Slot><Maps /></Slot>
      <Slot dot><Mail /></Slot>
      <Slot><Contacts /></Slot>
      <Slot><Photos /></Slot>
      <Slot><FaceTime /></Slot>
      <Slot><CalendarIcon /></Slot>
      <Slot><Reminders /></Slot>
      <Slot dot><Notes /></Slot>
      <Slot dot><Terminal /></Slot>
      <Slot dot><Music /></Slot>
      <Slot dot><Podcasts /></Slot>
      <Slot><Pages /></Slot>
      <Slot><Numbers /></Slot>
      <Slot><AppStore /></Slot>
      <Slot dot><Settings /></Slot>
      <div className="mt-[12px] mr-[18px] ml-[20px] h-[78px] w-[2px] shrink-0 bg-[#24252b]" />
      <Slot dot><ActivityMonitor /></Slot>
      <Slot dot><Webex /></Slot>
      <Slot dot><Edge /></Slot>
      <Slot dot><Word /></Slot>
      <Slot dot><Safari /></Slot>
      <Slot dot><GitHub /></Slot>
      <Slot dot><Warp /></Slot>
      <Slot dot><WebexMeet /></Slot>
      <Slot dot><RemoteDesktop /></Slot>
      <div className="mt-[12px] mr-[19px] ml-[22px] h-[78px] w-[2px] shrink-0 bg-[#24252b]" />
      <Slot w="w-[84px] translate-y-[6px]"><GitThumb /></Slot>
      <Slot w="w-[96px] translate-y-[4px]"><TermThumb /></Slot>
      <Slot w="w-[80px] translate-y-[-2px]"><Trash /></Slot>
    </div>
  );
}

export default function App() {
  return (
    <div className="h-[1800px] w-[2880px] overflow-hidden bg-[#020204]">
      <MenuBar />
      <TabStrip />
      <Toolbar />
      <AwsNav />
      <Content />
      <Footer />
      <Dock />
    </div>
  );
}
